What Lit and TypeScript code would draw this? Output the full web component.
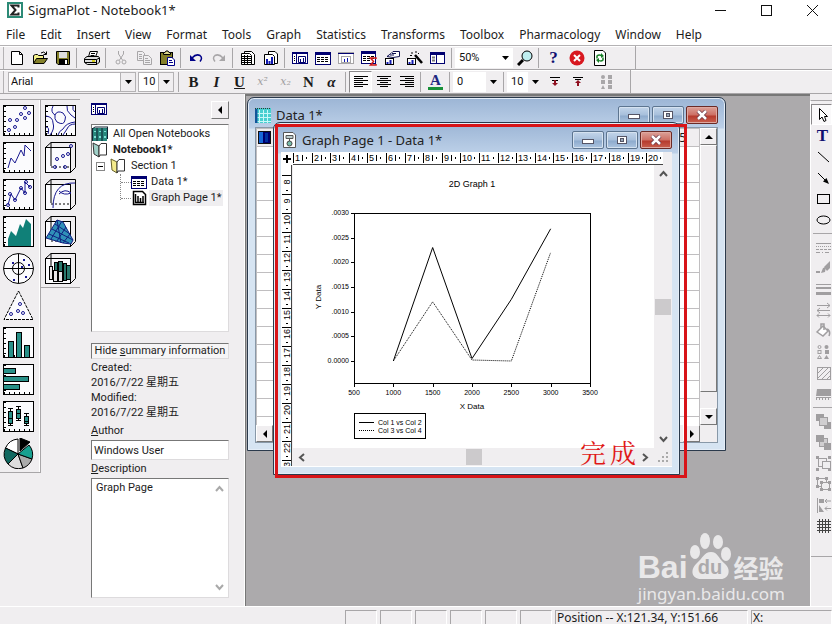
import { LitElement, html, svg, css, nothing } from "lit";
import { customElement, property } from "lit/decorators.js";

/* Line art shared by the toolbars, drawn on a 16 x 16 grid. */
const icons: Record<string, unknown> = {
  app: svg`<rect x="1" y="1" width="14" height="14" fill="#fff" stroke="#2c8a76" stroke-width="2"/><path d="M11.500 5.500V3.500H4.500L8.500 8L4.500 12.500H11.500V10.500" fill="none" stroke="#222" stroke-width="2"/>`,
  file: svg`<path d="M2.500 1.500H10.500L13.500 4.500V14.500H2.500Z" fill="#fff" stroke="#000"/><path d="M10.500 1.500V4.500H13.500" fill="none" stroke="#000"/>`,
  open: svg`<path d="M1.500 13.500V5.500L3.500 4.500H5.500L6.500 5.500H11.500V8.500" fill="#f4f08a" stroke="#000"/><path d="M1.500 13.500L4.500 8.500H15.500L12 13.500Z" fill="#84802a" stroke="#000"/><path d="M9 3Q12 .5 14 4M14.500 1.500V4.500H11.500" fill="none" stroke="#000"/>`,
  save: svg`<path d="M1.500 1.500H14.500V14.500H3L1.500 13Z" fill="#84802a" stroke="#000"/><rect x="4" y="2" width="8" height="6" fill="#ddd"/><rect x="4" y="9" width="9" height="5" fill="#000"/><rect x="10" y="10" width="2" height="4" fill="#fff"/>`,
  print: svg`<path d="M4.500 7L6 1.500H13.500L11.500 7Z" fill="#fff" stroke="#000"/><path d="M7 3.500H11M6.500 5.500H10.500" stroke="#000"/><path d="M.5 8.500L3 6.500H14.500L15.500 8V12L13 14.500H3.500L.5 12.500Z" fill="#ddd" stroke="#000"/><path d="M.5 9.500H12.500L15.500 8M1 12.500H13M12.500 9.500V14" fill="none" stroke="#000"/><path d="M8 11H11" stroke="#d8d020" stroke-width="2"/>`,
  cut: svg`<g fill="none" stroke="#a8a6a8"><path d="M5.500 1V4L9.500 10M10.500 1V4L6.500 10"/><circle cx="5" cy="12" r="2"/><circle cx="11" cy="12" r="2"/></g>`,
  copy: svg`<g fill="#efeef0" stroke="#a8a6a8"><path d="M1.500 1.500H6.500L8.500 3.500V10.500H1.500Z"/><path d="M3 4.500H6M3 6.500H6M3 8.500H6"/><path d="M7.500 5.500H12.500L15.500 8.500V14.500H7.500Z"/><path d="M9 8.500H12M9 10.500H14M9 12.500H14"/></g>`,
  paste: svg`<rect x="1.500" y="2.500" width="12" height="12" fill="#84802a" stroke="#000"/><path d="M4.500 4.500V2.500H6L7 1H9L10 2.500H11.500V4.500Z" fill="#ddd88a" stroke="#000"/><path d="M8.500 7.500H13L15.500 10V15.500H8.500Z" fill="#fff" stroke="#000088"/><path d="M10 10.500H13M10 12.500H14" stroke="#000088"/>`,
  undo: svg`<path d="M4 8Q8 3.500 12 5.500Q15 8 12 11.500" fill="none" stroke="#000088" stroke-width="1.500"/><path d="M2 5V11H8Z" fill="#000088"/>`,
  redo: svg`<path d="M12 8Q8 3.500 4 5.500Q1 8 4 11.500" fill="none" stroke="#a8a6a8" stroke-width="1.500"/><path d="M14 5V11H8Z" fill="#a8a6a8"/>`,
  sheet: svg`<path d="M4.500 1.500H11.500L14.500 4.500V14.500H4.500Z" fill="#fff" stroke="#000"/><path d="M1.500 3.500H9.500L11.500 5.500V14.500H1.500Z" fill="#fff" stroke="#000"/><path d="M2 6.500H11M2 8.500H11M2 10.500H11M2 12.500H11M4.500 5V14M7.500 5V14" stroke="#000"/>`,
  chartpage: svg`<path d="M5.500 1.500H12L14.500 4V13.500H5.500Z" fill="#fff" stroke="#000"/><path d="M1.500 4.500H9.500L11.500 6.500V14.500H1.500Z" fill="#fff" stroke="#000"/><path d="M4 9V14M6.500 11V14M9 7V14" stroke="#1018b0" stroke-width="2"/>`,
  winpage: svg`<rect x="0.500" y="2.500" width="15" height="11" fill="#fff" stroke="#000070"/><path d="M0 3.500H16M4.500 3V14" stroke="#000070"/><path d="M2 6.500H3M2 8.500H3M2 10.500H3" stroke="#000"/><path d="M6.500 6.500H13.500V12.500H6.500Z" fill="none" stroke="#000070"/><path d="M8.500 9V12M11.500 8V12" stroke="#000070"/>`,
  wintable: svg`<rect x="0.500" y="2.500" width="15" height="12" fill="#fff" stroke="#000070"/><path d="M0 3.500H16" stroke="#000070" stroke-width="3"/><path d="M2 7.500H14M2 9.500H14M2 11.500H14" stroke="#000" stroke-dasharray="3 1"/>`,
  wingraph: svg`<rect x="0.500" y="2.500" width="15" height="11" fill="#fff" stroke="#a8a6a8"/><path d="M0 3.500H16" stroke="#000070"/><rect x="3.500" y="6.500" width="9" height="6" fill="none" stroke="#a8a6a8"/><path d="M6.500 9V12M9.500 8V12" stroke="#1018b0"/>`,
  winstat: svg`<rect x="0.500" y="1.500" width="14" height="12" fill="#fff" stroke="#000070"/><path d="M0 2.500H15" stroke="#000070" stroke-width="3"/><path d="M2 6.500H13M2 8.500H13M2 10.500H9" stroke="#000" stroke-dasharray="3 1"/><path d="M15 9V8H9.500L12.500 11.500L9.500 15H15V14" fill="none" stroke="#d01818" stroke-width="1.500"/>`,
  hand: svg`<rect x="1.500" y="8.500" width="8" height="6" fill="#fff" stroke="#000"/><path d="M3.500 12V14M6.500 10V14" stroke="#1018b0" stroke-width="2"/><path d="M3 6.500L7 3.500L9 1.500H15.500V6.500L9 7.500Z" fill="#fff" stroke="#101050"/><path d="M6 5H10M8 3.500H12" stroke="#101050"/>`,
  wand: svg`<rect x="0.500" y="8.500" width="8" height="6" fill="#fff" stroke="#000"/><path d="M2.500 12V14M5.500 10V14" stroke="#1018b0" stroke-width="2"/><path d="M8 5L15 13" stroke="#000" stroke-width="2.500"/><path d="M5 2V4M9 1V3M3 5.500H5M11 4L12 3" stroke="#000"/>`,
  winlist: svg`<rect x="0.500" y="2.500" width="14" height="11" fill="#fff" stroke="#000070"/><path d="M0 3.500H15" stroke="#000070" stroke-width="3"/><path d="M6.500 4V14" stroke="#000070"/><path d="M2 7.500H5M2 10.500H5" stroke="#777" stroke-width="2"/>`,
  lens: svg`<circle cx="10" cy="6" r="5" fill="#bfeef0" stroke="#000"/><path d="M6 10L1 15" stroke="#000" stroke-width="3"/>`,
  stop: svg`<circle cx="8" cy="8" r="7.500" fill="#d81820"/><path d="M5 5L11 11M11 5L5 11" stroke="#fff" stroke-width="2"/>`,
  refresh: svg`<path d="M2.500 0.500H11L13.500 3V15.500H2.500Z" fill="#fff" stroke="#000"/><path d="M5 8.500V6Q7 4 10 6M11 7.500V10Q9 12 6 10" fill="none" stroke="#188028" stroke-width="1.500"/><path d="M9 3V8L12 6ZM7 8V13L4 10Z" fill="#188028"/>`,
  left: svg`<path d="M1 2.500H15M1 4.500H10M1 6.500H15M1 8.500H10M1 10.500H15M1 12.500H10" stroke="#000"/>`,
  center: svg`<path d="M1 2.500H15M4 4.500H12M1 6.500H15M4 8.500H12M1 10.500H15M4 12.500H12" stroke="#000"/>`,
  right: svg`<path d="M1 2.500H15M6 4.500H15M1 6.500H15M6 8.500H15M1 10.500H15M6 12.500H15" stroke="#000"/>`,
  down: svg`<path d="M3 3.500H13M5 6.500H11" stroke="#000"/><path d="M8 6V10" stroke="#901020" stroke-width="2"/><path d="M5 9H11L8 12Z" fill="#901020"/>`,
  up: svg`<path d="M3 3.500H13M5 5.500H11" stroke="#000"/><path d="M8 8V12" stroke="#901020" stroke-width="2"/><path d="M5 9H11L8 6Z" fill="#901020"/>`,
  dots: svg`<g fill="#a8a6a8"><circle cx="4" cy="3" r="2"/><rect x="9" y="1" width="4" height="4"/><rect x="2" y="6" width="4" height="4"/><rect x="9" y="6" width="4" height="4"/><path d="M2 15L4 11L6 15Z"/><rect x="9" y="11" width="4" height="4"/></g>`,
  pointer: svg`<path d="M4.500 1.500V12.500L7 10L9 14.500L11 13.500L9.500 9.500H12.500Z" fill="#fff" stroke="#000"/>`,
  line: svg`<path d="M3 3L14 13" stroke="#000"/>`,
  arrow: svg`<path d="M3 3L12 12" stroke="#000"/><path d="M14 14L8 11.500L11.500 8Z" fill="#000"/>`,
  rect: svg`<rect x="2.500" y="3.500" width="12" height="9" fill="none" stroke="#000"/>`,
  oval: svg`<ellipse cx="8.500" cy="8" rx="6.500" ry="4" fill="none" stroke="#000"/>`,
  dashes: svg`<g stroke="#a09ea0"><path d="M1 4.500H16"/><path d="M1 7.500H16" stroke-dasharray="1 1"/><path d="M1 10.500H16" stroke-dasharray="3 1"/><path d="M1 13.500H16" stroke-dasharray="4 2 1 2"/></g>`,
  brush: svg`<g fill="#a09ea0"><path d="M1 13H5V11H1ZM6 13L8 8L11 7L10 12Z"/><path d="M9 7L15 1V8L12 11Z"/></g>`,
  weights: svg`<path d="M1 3.500H16" stroke="#a09ea0"/><path d="M1 7H16" stroke="#a09ea0" stroke-width="2"/><path d="M1 12.500H16" stroke="#a09ea0" stroke-width="3"/>`,
  swaps: svg`<g fill="none" stroke="#a09ea0"><path d="M2 3.500H15M12 1L15 3.500L12 6M15 8.500H2M5 6L2 8.500L5 11M2 13.500H15M4 11.500L2 13.500L4 15.500M13 11.500L15 13.500L13 15.500"/></g>`,
  bucket: svg`<path d="M2 9L8 3L13 8L8 13Z" fill="#fff" stroke="#a09ea0" stroke-width="1.500"/><path d="M6 5V1H9V7M12 6Q16 8 14 13" fill="none" stroke="#a09ea0" stroke-width="1.500"/>`,
  symbols: svg`<g fill="none" stroke="#a09ea0"><circle cx="4.500" cy="3" r="1.500"/><rect x="3" y="6.500" width="3" height="3"/><path d="M2.500 14.500L4.500 11.500L6.500 14.500Z"/></g><g fill="#a09ea0"><circle cx="11.500" cy="3" r="2"/><rect x="10" y="6" width="4" height="4"/><path d="M9 15L11.500 11L14 15Z"/></g>`,
  hatch: svg`<rect x="2.500" y="2.500" width="13" height="12" fill="none" stroke="#a09ea0"/><path d="M3 8L8 3M3 13L13 3M7 14L15 6M12 14L15 11" stroke="#a09ea0"/>`,
  ruler: svg`<path d="M2 3H16V10H1Z" fill="#a09ea0"/><path d="M1 11.500H16" stroke="#a09ea0"/><path d="M1 13H16" stroke="#a09ea0" stroke-width="2" stroke-dasharray="1 2"/>`,
  front: svg`<g fill="#a09ea0"><rect x="1" y="1" width="8" height="7"/><rect x="9" y="9" width="7" height="7"/></g><rect x="4.500" y="4.500" width="8" height="8" fill="#d0ced0" stroke="#a09ea0"/>`,
  back: svg`<rect x="4.500" y="4.500" width="8" height="8" fill="#d0ced0" stroke="#a09ea0"/><g fill="#a09ea0"><rect x="1" y="1" width="8" height="7"/><rect x="9" y="9" width="7" height="7"/></g>`,
  group: svg`<g fill="none" stroke="#a09ea0"><rect x="3.500" y="3.500" width="8" height="8"/><rect x="7.500" y="6.500" width="8" height="7" fill="#efeef0"/></g><g fill="#a09ea0"><rect x="1" y="1" width="3" height="3"/><rect x="13" y="1" width="3" height="3"/><rect x="1" y="13" width="3" height="3"/><rect x="13" y="13" width="3" height="3"/></g>`,
  ungroup: svg`<g fill="none" stroke="#a09ea0"><rect x="2.500" y="2.500" width="9" height="8"/><rect x="6.500" y="6.500" width="8" height="7" fill="#efeef0"/></g><g fill="#a09ea0"><rect x="1" y="1" width="3" height="3"/><rect x="10" y="1" width="3" height="3"/><rect x="1" y="9" width="3" height="3"/><rect x="5" y="5" width="3" height="3"/><rect x="13" y="5" width="3" height="3"/><rect x="5" y="12" width="3" height="3"/><rect x="13" y="12" width="3" height="3"/></g>`,
  align: svg`<path d="M2.500 1V16M10 4H16M10 11.500H16M12 2L10 4L12 6M12 9.500L10 11.500L12 13.500" fill="none" stroke="#a09ea0"/><path d="M4 2H9V6H4ZM4 8L9 15H4Z" fill="#a09ea0"/>`,
  grid: svg`<path d="M2 3.500H16M2 6.500H16M2 9.500H16M2 12.500H16M4.500 1V15M7.500 1V15M10.500 1V15M13.500 1V15" stroke="#444"/>`,
  books: svg`<rect x="0" y="2" width="15" height="13" fill="#28877c"/><path d="M0 3L3 1H16L15 3M5 2V15M10 2V15M0.500 2V15M15.500 1V13" fill="none" stroke="#123"/><path d="M3 5V6M8 5V6M13 5V6M3 10V12M8 10V12M13 10V12" stroke="#7fe0d8" stroke-width="2"/>`,
  notebook: svg`<path d="M1 1L7 4V15L2 12Z" fill="#9fd0c8" stroke="#333"/><path d="M7 4L9 1.500H14.500V13H8L7 15Z" fill="#fff" stroke="#333"/>`,
  section: svg`<path d="M1 1L7 4V15L2 12Z" fill="#f4eb8c" stroke="#66602a"/><path d="M7 4L9 1.500H14.500V13H8L7 15Z" fill="#fff" stroke="#333"/>`,
  graphpage: svg`<path d="M2.500 1.500H11.500L14.500 4.500V14.500H2.500Z" fill="#fff" stroke="#000" stroke-width="1.500"/><path d="M4.500 4V12.500H13M7 6V12M9.500 8V12M12 6V12" fill="none" stroke="#000" stroke-width="1.500"/>`,
  datawin: svg`<rect x="0" y="1" width="16" height="15" fill="#48cfd0"/><path d="M0 1.500H16M0.500 1V16" stroke="#333" stroke-dasharray="1 1"/><path d="M4.500 3V16M8.500 3V16M12.500 3V16M1 6.500H16M1 10.500H16M1 14.500H16" stroke="#c8f8f8"/><path d="M1 2V16" stroke="#159" stroke-width="3"/>`,
  graphwin: svg`<path d="M2.500 .5H12L14.500 3V15.500H2.500Z" fill="#fff" stroke="#555"/><path d="M5 3.500H12V6.500H5ZM8.500 7V9" fill="#bcc" stroke="#555"/><circle cx="8.500" cy="11.500" r="2.500" fill="#7ba" stroke="#444"/>`,
  bluecell: svg`<rect x="1.500" y="1.500" width="12" height="12" fill="#000070" stroke="#111"/><rect x="2" y="2" width="4" height="11" fill="#1868d8"/><rect x="8" y="3" width="3" height="9" fill="#0030a0"/>`,
};

const icon = (name: string) => html`<svg class="icon" width="16" height="16" viewBox="0 0 16 16" aria-hidden="true">${icons[name]}</svg>`;

/* Graph-type thumbnails, drawn on a 31 x 31 grid. */
const frame = svg`<rect x="0.500" y="0.500" width="30" height="30" fill="#fbfbfd" stroke="#000"/><path d="M2 1V30" stroke="#000" stroke-width="2" stroke-dasharray="1 4"/><path d="M1 29H30" stroke="#000" stroke-width="2" stroke-dasharray="1 4"/>`;
const cube = svg`<rect x="0.500" y="5.500" width="25" height="25" fill="#fbfbfd" stroke="#000"/><path d="M.5 5.500L6 .5H30.500V25.500L25.500 30.500M6 .5V24" fill="none" stroke="#000"/><path d="M6 5.500H25.500V25M6 25H26" fill="none" stroke="#000" stroke-dasharray="2 2"/>`;
const dot = (x: number, y: number) => svg`<circle cx=${x} cy=${y} r="1.500" fill="none" stroke="#181890"/>`;
const thumbs: Record<string, unknown> = {
  Scatter: svg`${frame}${[[6, 25], [12, 22], [7, 15], [14, 15], [18, 9], [22, 13], [26, 8], [22, 3]].map(([x, y]) => dot(x, y))}`,
  Line: svg`${frame}<path d="M5 26L8 16L12 21L18 8L21 14L22 3L28 9" fill="none" stroke="#181890"/>`,
  "Line and scatter": svg`${frame}<path d="M5 26L8 15L12 21L18 9L22 14L22 3L27 8" fill="none" stroke="#181890"/>${[[5, 26], [7, 15], [12, 21], [18, 9], [22, 14], [23, 3], [27, 8]].map(([x, y]) => dot(x, y))}`,
  Area: svg`${frame}<path d="M5 30V23L8 15L13 20L17 8L20 12L23 3L28 8V30Z" fill="#108078"/>`,
  Polar: svg`<circle cx="15.500" cy="15.500" r="15" fill="#fbfbfd" stroke="#000"/><circle cx="15.500" cy="15.500" r="6" fill="none" stroke="#000"/><path d="M.5 15.500H30.500M15.500 .5V30.500" stroke="#000"/>${[[9, 9], [20, 6], [25, 11], [22, 23], [10, 26], [18, 13]].map(([x, y]) => svg`<rect x=${x} y=${y} width="2" height="2" fill="#181890"/>`)}`,
  Ternary: svg`<path d="M15.500 1L30 29.500H1Z" fill="#fbfbfd" stroke="#000" stroke-dasharray="3 1"/>${[[17, 14], [15, 21], [20, 23], [8, 24]].map(([x, y]) => dot(x, y))}`,
  "Vertical bar": svg`${frame}<g fill="#289088" stroke="#000"><rect x="5.500" y="14.500" width="5" height="16"/><rect x="13.500" y="5.500" width="5" height="25"/><rect x="21.500" y="18.500" width="5" height="12"/></g>`,
  "Horizontal bar": svg`${frame}<g fill="#289088" stroke="#000"><rect x=".5" y="4.500" width="12" height="5"/><rect x=".5" y="12.500" width="25" height="5"/><rect x=".5" y="20.500" width="16" height="5"/></g>`,
  "Box plot": svg`${frame}<path d="M7.500 7V25M15.500 5V20M23.500 12V25M5 7.500H10M5 24.500H10M13 5.500H18M13 19.500H18M21 12.500H26M21 24.500H26" stroke="#000"/><g fill="#289088" stroke="#000"><rect x="5.500" y="10.500" width="4" height="12"/><rect x="13.500" y="8.500" width="4" height="9"/><rect x="21.500" y="15.500" width="4" height="7"/></g><path d="M6 17.500H9M14 12.500H18M22 20.500H26" stroke="#000"/>`,
  Pie: svg`<g stroke="#000"><path d="M15 16V1A15 15 0 0 0 2.500 10Z" fill="#fff"/><path d="M15 16L2.500 10A15 15 0 0 0 5 26Z" fill="#106860"/><path d="M15 16L5 26A15 15 0 0 0 20 30Z" fill="#ddd"/><path d="M15 16L20 30A15 15 0 0 0 29 21Z" fill="#aaa"/><path d="M15 16L29 21A15 15 0 0 0 26 7Z" fill="#18a090"/><path d="M17 13V0L27 4Z" fill="#000"/></g>`,
  Contour: svg`${frame}<g fill="none" stroke="#181890"><path d="M1 11Q8 12 8 18Q10 24 5 30M8 1Q5 7 10 10Q9 14 12 17Q19 21 20 15Q22 12 18 8Q12 5 10 10M1 22Q5 22 3 29M22 1Q21 6 26 10L30 13M30 19Q24 19 22 24L18 30M13 30Q14 26 18 24Q21 18 30 17M28 1Q27 5 30 7"/></g>`,
  "3D scatter": svg`${cube}${[[12, 17], [18, 14], [23, 12], [26, 4], [10, 25], [20, 25]].map(([x, y]) => dot(x, y))}`,
  "3D line": svg`${cube}<path d="M8 29Q8 3 30 4M14 15Q20 9 26 14Q19 17 14 12" fill="none" stroke="#181890"/>`,
  "3D mesh": svg`${cube}<path d="M1 22L12 4L18 6L28 24L26 28L18 27Z" fill="#3090b8" stroke="#102080"/><path d="M4 18L24 27M7 13L28 24M10 8L25 18M6 23L17 5M12 25L21 11M18 27L25 18M12 4L16 27" fill="none" stroke="#102080"/>`,
  "3D bar": svg`${cube}<g fill="#28786c" stroke="#000"><rect x="9.500" y="9.500" width="3" height="17"/><rect x="13.500" y="8.500" width="4" height="18"/><rect x="18.500" y="10.500" width="3" height="17"/><rect x="21.500" y="12.500" width="4" height="14"/></g><g fill="#e8e6e8" stroke="#000"><rect x="4.500" y="13.500" width="3" height="13"/><rect x="8.500" y="17.500" width="4" height="11"/><rect x="13.500" y="18.500" width="4" height="10"/></g>`,
};

/* Child window of the workspace: caption bar with its three buttons over a slotted client area. */
@customElement("mdi-window")
export class MdiWindow extends LitElement {
  @property() caption = "";
  @property() glyph = "";

  static styles = css`
    :host { display: flex; flex-direction: column; box-sizing: border-box; border: 1px solid #2b3a4c; border-radius: 7px 7px 0 0; background: linear-gradient(#9cb5d5, #bcd0e8 30px, #d6e4f2 31px); padding: 0 7px 7px; box-shadow: inset 0 0 0 1px #e4edf7; overflow: hidden; }
    .bar { box-sizing: border-box; display: flex; align-items: center; gap: 5px; height: 29px; padding-top: 5px; flex: none; font: 13px/20px "Noto Sans", sans-serif; color: #222; }
    .icon { flex: none; }
    h2 { flex: 1; margin: 0; font: inherit; white-space: nowrap; }
    .buttons { display: flex; gap: 2px; }
    button { width: 32px; height: 18px; padding: 0; border: 1px solid #5d7590; border-radius: 2px; background: linear-gradient(#c3d5ea, #a7bfdb 8px, #8eabcd 9px, #adc5e0); box-shadow: inset 0 0 0 1px #d5e2f0; display: grid; place-items: center; }
    button.close { border-color: #6b2a26; background: linear-gradient(#dba199, #cd6f64 8px, #b63a2d 9px, #c8604f); box-shadow: inset 0 0 0 1px #dfa8a0; }
    .client { flex: 1; min-height: 0; display: grid; }
  `;

  render() {
    return html`
      <div class="bar">
        ${icon(this.glyph)}
        <h2>${this.caption}</h2>
        <div class="buttons">
          <button aria-label="Minimize"><svg width="12" height="10"><rect x="0.500" y="4.500" width="11" height="4" fill="#fff" stroke="#556"/></svg></button>
          <button aria-label="Maximize"><svg width="12" height="10"><rect x="1.500" y="1.500" width="9" height="7" fill="#fff" stroke="#556"/><rect x="4.500" y="3.500" width="3" height="3" fill="#9ab" stroke="#556"/></svg></button>
          <button class="close" aria-label="Close"><svg width="12" height="10"><path d="M2 1L10 9M10 1L2 9" stroke="#634" stroke-width="4"/><path d="M2 1L10 9M10 1L2 9" stroke="#fff" stroke-width="2.500"/></svg></button>
        </div>
      </div>
      <div class="client"><slot></slot></div>
    `;
  }
}

/* 2D line plot with its title, axes and legend. */
@customElement("line-plot")
export class LinePlot extends LitElement {
  static styles = css`
    :host { display: block; background: #fff; overflow: hidden; }
    svg { display: block; }
    text { font-family: "Liberation Sans", sans-serif; fill: #000; }
    .title { font-size: 9px; }
    .axis { font-size: 8px; }
    .tick { font-size: 7px; }
  `;

  private px = (v: number) => 61 + ((v - 500) * 236) / 3000;
  private py = (v: number) => 196 - (v * 148) / 0.003;

  private path(points: number[][]) {
    return points.map(([x, y]) => `${this.px(x)},${this.py(y)}`).join(" ");
  }

  render() {
    const xs = [500, 1000, 1500, 2000, 2500, 3000, 3500];
    const ys = [0, 0.0005, 0.001, 0.0015, 0.002, 0.0025, 0.003];
    return html`<svg width="361" height="286" viewBox="0 0 361 286" role="img" aria-label="2D Graph 1">
      <text class="title" x="179" y="22" text-anchor="middle">2D Graph 1</text>
      <rect x="61.500" y="48.500" width="236" height="170" fill="none" stroke="#000"/>
      ${xs.map((x) => svg`<path d="M${Math.round(this.px(x)) + 0.5} 218V222" stroke="#000"/><text class="tick" x=${this.px(x)} y="230" text-anchor="middle">${x}</text>`)}
      ${ys.map((y) => svg`<path d="M58 ${Math.round(this.py(y)) + 0.5}H61" stroke="#000"/><text class="tick" x="56" y=${this.py(y) + 2} text-anchor="end">${y ? y.toFixed(4).slice(1) : "0.0000"}</text>`)}
      <text class="axis" x="179" y="244" text-anchor="middle">X Data</text>
      <text class="axis" transform="translate(28 132) rotate(-90)" text-anchor="middle">Y Data</text>
      <polyline points=${this.path([[1000, 0], [1500, 0.0023], [2000, 0.00005], [2500, 0.00125], [3000, 0.00268]])} fill="none" stroke="#000"/>
      <polyline points=${this.path([[1000, 0], [1500, 0.0012], [2000, 0.00002], [2500, 0], [3000, 0.0022]])} fill="none" stroke="#000" stroke-dasharray="1 1"/>
      <rect x="61.500" y="248.500" width="71" height="25" fill="#fff" stroke="#000"/>
      <path d="M66 257.500H81" stroke="#000"/>
      <path d="M66 265.500H81" stroke="#000" stroke-dasharray="1 1"/>
      <text class="tick" x="85" y="260">Col 1 vs Col 2</text>
      <text class="tick" x="85" y="268">Col 3 vs Col 4</text>
    </svg>`;
  }
}

type Tool = { t: string; icon?: string; glyph?: string; cls?: string; on?: boolean };
const SEP: Tool = { t: "" };

const standard: Tool[][] = [
  [
    { t: "New", icon: "file" }, { t: "Open", icon: "open" }, { t: "Save", icon: "save" }, SEP,
    { t: "Print", icon: "print" }, SEP,
    { t: "Cut", icon: "cut" }, { t: "Copy", icon: "copy" }, { t: "Paste", icon: "paste" }, SEP,
    { t: "Undo", icon: "undo" }, { t: "Redo", icon: "redo" }, SEP,
    { t: "New worksheet", icon: "sheet" }, { t: "New graph page", icon: "chartpage" }, SEP,
    { t: "View page", icon: "winpage" }, { t: "View worksheet", icon: "wintable" }, { t: "View graph", icon: "wingraph" },
    { t: "Column statistics", icon: "winstat" }, { t: "Graph properties", icon: "hand" }, { t: "Graph wizard", icon: "wand" }, { t: "Notebook manager", icon: "winlist" }, SEP,
  ],
  [
    { t: "Zoom", icon: "lens" }, SEP, { t: "Help", glyph: "?", cls: "help" }, { t: "Stop", icon: "stop" }, { t: "Refresh", icon: "refresh" },
  ],
];

const format: Tool[] = [
  SEP,
  { t: "Bold", glyph: "B", cls: "bold" }, { t: "Italic", glyph: "I", cls: "bold italic" }, { t: "Underline", glyph: "U", cls: "bold under" },
  { t: "Superscript", glyph: "x²", cls: "dim" }, { t: "Subscript", glyph: "x₂", cls: "dim" },
  { t: "Normal", glyph: "N", cls: "bold" }, { t: "Greek", glyph: "α", cls: "bold italic" }, SEP,
  { t: "Align left", icon: "left", on: true }, { t: "Align center", icon: "center" }, { t: "Align right", icon: "right" }, SEP,
  { t: "Text color", glyph: "A", cls: "color" }, SEP,
];

const drawing: Tool[] = [
  { t: "Select", icon: "pointer", on: true }, { t: "Text", glyph: "T", cls: "help" }, { t: "Line", icon: "line" }, { t: "Arrow", icon: "arrow" },
  { t: "Rectangle", icon: "rect" }, { t: "Ellipse", icon: "oval" }, SEP,
  { t: "Line type", icon: "dashes" }, { t: "Line color", icon: "brush" }, { t: "Line thickness", icon: "weights" }, { t: "Line ends", icon: "swaps" },
  { t: "Fill color", icon: "bucket" }, { t: "Symbols", icon: "symbols" }, { t: "Fill pattern", icon: "hatch" }, { t: "Bar width", icon: "ruler" }, SEP,
  { t: "Bring to front", icon: "front" }, { t: "Send to back", icon: "back" }, { t: "Group", icon: "group" }, { t: "Ungroup", icon: "ungroup" },
  { t: "Align", icon: "align" }, { t: "Grid", icon: "grid" },
];

const menus = ["File", "Edit", "Insert", "View", "Format", "Tools", "Graph", "Statistics", "Transforms", "Toolbox", "Pharmacology", "Window", "Help"];
const palettes = [
  ["Scatter", "Line", "Line and scatter", "Area", "Polar", "Ternary", "Vertical bar", "Horizontal bar", "Box plot", "Pie"],
  ["Contour", "3D scatter", "3D line", "3D mesh", "3D bar"],
];

@customElement("app-root")
export class AppRoot extends LitElement {
  static styles = css`
    :host { display: flex; flex-direction: column; height: 100vh; overflow: hidden; background: #f0eef0; color: #1c1c1c; font: 12px/16px "Noto Sans", "Noto Sans CJK SC", sans-serif; }
    * { box-sizing: border-box; }
    button { font: inherit; color: inherit; padding: 0; border: 0; background: none; }
    .icon { display: block; flex: none; }

    .titlebar { display: flex; align-items: center; height: 20px; flex: none; background: #fff; padding-left: 7px; gap: 5px; font-size: 13px; }
    .titlebar h1 { flex: 1; margin: 0; font: inherit; }
    .caption { display: flex; gap: 6px; }
    .caption button { width: 40px; height: 20px; display: grid; place-items: center; }
    .menubar { display: flex; align-items: center; gap: 15px; height: 26px; flex: none; background: #fff; padding: 4px 6px 0; border-bottom: 1px solid #b4b2b4; }

    .toolbar { display: flex; align-items: center; height: 24px; flex: none; padding-left: 5px; border-bottom: 1px solid #a8a6a8; box-shadow: inset 0 1px #fff, inset 3px 0 #f0eef0, inset 4px 0 #b4b2b4; }
    .tool { width: 23px; height: 22px; display: grid; place-items: center; flex: none; }
    .tool.on { border: 1px solid; border-color: #8a888a #fff #fff #8a888a; background: #faf9fa; }
    .sep { width: 1px; height: 20px; margin: 0 3px 0 2px; background: #a8a6a8; flex: none; }
    .sep.blank { background: none; }
    .sep.edge { height: 24px; margin-left: 24px; }
    .blank ~ .sep.edge { margin-left: 12px; }
    .combo { display: grid; flex: none; background: #fff; height: 20px; }
    .combo select, .combo .drop { grid-area: 1 / 1; }
    .combo select { appearance: none; border: 0; background: none; padding: 0 4px; width: 100%; font: 11px/18px Roboto, sans-serif; color: #111; }
    .combo .drop { justify-self: end; width: 15px; background: #f0eef0; display: grid; place-items: center; pointer-events: none; }
    .combo.zoom .drop { background: #fff; }
    .combo.framed { border: 1px solid #b4b2b4; }
    .combo.framed .drop { border-left: 1px solid #b4b2b4; }
    .face { width: 128px; margin-left: 3px; }
    .combo.face select { padding: 0 2px; }
    .size { width: 36px; margin: 0 2px; }
    .zoom { width: 58px; }
    .angle { width: 48px; }
    .space { width: 36px; }
    .glyph { font: 15px/18px "Liberation Serif", serif; }
    .bold { font-weight: bold; }
    .italic { font-style: italic; }
    .under { text-decoration: underline; }
    .dim { color: #a09ea0; font: italic 11px/18px "DejaVu Serif", serif; }
    .help { font-weight: bold; color: #101070; font-size: 17px; }
    .color { font-weight: bold; color: #202880; line-height: 14px; border-bottom: 3px solid #189038; padding: 0 2px; }

    .main { flex: 1; min-height: 0; display: flex; }
    .palettes { display: flex; align-items: flex-start; flex: none; }
    .palette { width: 41px; display: flex; flex-direction: column; gap: 6px; padding: 5px 0 3px 3px; margin-top: 5px; border-top: 1px solid #a8a6a8; border-right: 1px solid #a8a6a8; border-bottom: 1px solid #a8a6a8; box-shadow: inset -1px 0 #fff; }
    .palette + .palette { padding-left: 4px; width: 39px; border-right: 0; box-shadow: none; }
    .palette svg { display: block; }

    .notebook { width: 165px; flex: none; display: flex; flex-direction: column; padding: 7px 15px 8px 11px; border-right: 1px solid #fff; font: 11px/16px Roboto, "Noto Sans CJK SC", sans-serif; }
    .head { display: flex; justify-content: space-between; height: 18px; margin-bottom: 5px; }
    .head button { width: 18px; height: 18px; border: 1px solid; border-color: #fff #777 #777 #fff; display: grid; place-items: center; }
    .sunken { border: 1px solid; border-color: #777 #dddbdd #dddbdd #777; background: #fff; }
    .tree { margin: 0; padding: 1px 0 0; list-style: none; height: 208px; flex: none; }
    .tree ul { margin: 0; padding: 0 0 0 19px; list-style: none; }
    .row { display: flex; align-items: center; height: 16px; gap: 5px; white-space: nowrap; }
    .row.root { font-weight: bold; }
    .row.leaf { gap: 4px; }
    .row.leaf::before { content: ""; width: 10px; border-top: 1px dotted #888; margin: 0 -4px 0 -10px; }
    .leaves { border-left: 1px dotted #888; }
    .tree .leaves { padding-left: 10px; margin-left: 9px; height: 26px; }
    .box { width: 9px; height: 9px; border: 1px solid #888; display: grid; place-items: center; margin: 0 0 0 -15px; }
    .box::before { content: ""; width: 5px; height: 1px; background: #000; }
    .current { background: #efeef0; margin-left: -2px; padding: 0 2px; }
    .hide { height: 16px; margin: 11px 0 1px; line-height: 14px; border: 1px solid; border-color: #777 #dddbdd #dddbdd #777; background: #f6f5f6; white-space: nowrap; }
    .facts { margin: 0; line-height: 15px; padding-bottom: 2px; }
    .facts dd { margin: 0; }
    .notebook label { display: block; line-height: 18px; }
    .notebook input { height: 20px; width: 100%; padding: 0 2px; font: inherit; color: inherit; outline: 0; flex: none; }
    .memo { flex: 1; min-height: 0; display: flex; }
    .memo textarea { flex: 1; min-width: 0; resize: none; border: 0; outline: 0; padding: 1px 4px; font: inherit; color: inherit; background: none; overflow: hidden; }
    .arrows { display: flex; flex-direction: column; justify-content: space-between; padding: 6px 4px; opacity: 0.5; }

    .workspace { flex: 1; min-width: 0; position: relative; background: #acaaac; border-top: 2px solid #777; border-left: 1px solid #777; overflow: hidden; }
    .data-window { position: absolute; left: 1px; top: 1px; width: 479px; height: 354px; }
    .graph-window { position: absolute; left: 27px; top: 26px; width: 407px; height: 353px; }
    .outline { position: absolute; left: 29px; top: 28px; width: 412px; height: 354px; border: 3px solid #d81418; pointer-events: none; }
    .done { position: absolute; left: 334px; top: 338px; display: flex; gap: 4px; margin: 0; color: #e01818; font: 26px/36px "Noto Serif CJK SC", "Noto Sans CJK SC", sans-serif; }

    .worksheet { display: grid; grid-template-columns: 1fr 17px; grid-template-rows: 1fr 17px; border: 1px solid #8898a8; background: #f0eef0; min-height: 0; }
    .cells { border-collapse: collapse; width: 100%; background: #fff; table-layout: fixed; }
    .sheetbox { overflow: hidden; }
    .cells td, .cells th { height: 18px; padding: 0; border: 1px solid #c0bec0; font-weight: normal; font-size: 12px; line-height: 16px; }
    .cells th { background: #f0eef0; }
    .cells th:last-child { text-align: right; padding-right: 13px; }
    .cells .index { width: 20px; }
    .vbar, .hbar { display: flex; justify-content: space-between; background: #f0eef0; }
    .vbar { flex-direction: column; }
    .raised { background: #f0eef0; border: 1px solid; border-color: #fff #777 #777 #fff; width: 17px; height: 17px; display: grid; place-items: center; flex: none; }
    .thumb { background: #f0eef0; border: 1px solid; border-color: #fff #777 #777 #fff; height: 247px; flex: none; margin-bottom: auto; }

    .page { display: grid; grid-template-columns: 12px 1fr 18px; grid-template-rows: 13px 1fr 18px; background: #f0eef0; border-bottom: 1px solid #fff; min-height: 0; overflow: hidden; }
    .page svg { display: block; }
    .page .side { grid-row: 2 / 4; overflow: hidden; }
    .page .top { grid-column: 2 / 4; overflow: hidden; }
    .page text { font: 9px "Liberation Sans", sans-serif; fill: #000; }
    .scroll { display: flex; justify-content: space-between; align-items: center; background: #f0eef0; padding: 0 5px; }
    .scroll.vertical { flex-direction: column; padding: 5px 0; }
    .scroll span { width: 16px; height: 16px; background: #cccacc; }
    .corner { display: flex; align-items: center; justify-content: center; }

    .watermark { position: absolute; right: 25px; bottom: 1px; color: #e9e8e9; }
    .logo { display: flex; align-items: flex-end; height: 50px; }
    .logo b { font: bold 32px/32px "Liberation Sans", sans-serif; }
    .logo .cn { font: bold 25px/32px "Noto Sans CJK SC", sans-serif; margin-left: 2px; }
    .paw { width: 44px; height: 52px; display: block; }
    .paw text { font: bold 20px "Liberation Sans", sans-serif; fill: #acaaac; }
    .site { font-size: 17px; line-height: 22px; }

    .drawing { width: 22px; flex: none; display: flex; flex-direction: column; margin-top: 6px; border-left: 1px solid #fff; border-top: 1px solid #a8a6a8; padding: 3px 0 0; }
    .drawing .tool { width: 21px; height: 21px; padding-left: 2px; }
    .drawing .sep { width: auto; height: 1px; margin: 3px 0 2px 2px; }
    .drawing .end { height: 1px; background: #a8a6a8; margin-top: 20px; }

    .status { display: flex; gap: 3px; height: 18px; flex: none; padding-top: 3px; justify-content: flex-end; border-top: 1px solid #fff; line-height: 13px; white-space: nowrap; }
    .status span { flex: 0 1 32px; border-top: 1px solid #a8a6a8; border-left: 1px solid #a8a6a8; border-right: 1px solid #fff; padding-left: 1px; }
    .status .pos { flex-basis: 193px; }
    .status .tail { flex-basis: 81px; }
  `;

  private tool = (x: Tool) =>
    x.t === ""
      ? html`<span class="sep"></span>`
      : html`<button class="tool ${x.on ? "on" : ""}" aria-label=${x.t}>${x.icon ? icon(x.icon) : html`<span class="glyph ${x.cls ?? ""}">${x.glyph}</span>`}</button>`;

  private combo = (cls: string, label: string, value: string) => html`
    <span class="combo ${cls}">
      <select aria-label=${label}><option>${value}</option></select>
      <span class="drop"><svg width="7" height="4"><path d="M0 0H7L3.500 4Z"/></svg></span>
    </span>`;

  private chevron = (d: string) => html`<svg width="9" height="9" viewBox="0 0 9 9"><path d=${d} fill="none" stroke="#555" stroke-width="2"/></svg>`;
  private wedge = (d: string) => html`<svg width="8" height="8" viewBox="0 0 8 8"><path d=${d} fill="#000"/></svg>`;

  private ruler(first: number, last: number, offset: number) {
    const out = [];
    for (let n = first; n <= last; n++) {
      const x = offset + Math.round((n - first) * 18.6);
      const end = x + (n > 9 ? 14 : 9);
      out.push(svg`<path d="M${x + 0.5} 1V11" stroke="#000"/><text x=${x + 2} y="9">${n}</text><path d="M${end + 0.5} ${n > 9 ? 5 : 3}V${n > 9 ? 7 : 9}" stroke="#000"/>${n < 10 ? svg`<path d="M${end + 4.5} 5V7" stroke="#000"/>` : nothing}`);
    }
    return out;
  }

  private worksheet() {
    return html`<div class="worksheet">
      <div class="sheetbox">
        <table class="cells">
          <thead><tr><th class="index">${icon("bluecell")}</th><th>5</th></tr></thead>
          <tbody>${Array.from({ length: 16 }, () => html`<tr><td class="index"></td><td></td></tr>`)}</tbody>
        </table>
      </div>
      <div class="vbar">
        <span class="raised">${this.wedge("M0 6L4 2L8 6Z")}</span>
        <span class="thumb"></span>
        <span class="raised">${this.wedge("M0 2L4 6L8 2Z")}</span>
      </div>
      <div class="hbar">
        <span class="raised">${this.wedge("M6 0L2 4L6 8Z")}</span>
        <span class="raised">${this.wedge("M2 0L6 4L2 8Z")}</span>
      </div>
    </div>`;
  }

  private graphPage() {
    return html`<div class="page">
      <svg width="12" height="13"><rect width="12" height="13" fill="#fff"/><path d="M2 7H10M6 3V11" stroke="#000" stroke-width="2"/></svg>
      <div class="top"><svg width="370" height="13"><rect width="370" height="12" fill="#fff"/><path d="M0 12.500H370" stroke="#444"/>${this.ruler(1, 20, 0)}</svg></div>
      <div class="side"><svg width="12" height="305"><rect width="11" height="305" fill="#fff"/><path d="M10.500 0V305" stroke="#444"/><g transform="rotate(-90)">${Array.from({ length: 16 }, (_, i) => {
        const y = 10 + i * 19;
        const mid = y + 7;
        return svg`<path d="M${-y - 0.5} 1V10" stroke="#000"/><text x=${-mid} y="9" text-anchor="middle">${i + 8}</text><path d="M${-y - 15.5} 5V7" stroke="#000"/>`;
      })}</g></svg></div>
      <line-plot></line-plot>
      <div class="scroll vertical">${this.chevron("M1 6L4.500 2L8 6")}<span></span>${this.chevron("M1 3L4.500 7L8 3")}</div>
      <div class="scroll">${this.chevron("M6 1L2 4.500L6 8")}<span></span>${this.chevron("M3 1L7 4.500L3 8")}</div>
      <div class="corner"><svg width="10" height="10" fill="#aaa"><path d="M8 0h2v2h-2zM4 4h2v2h-2zM8 4h2v2h-2zM0 8h2v2h-2zM4 8h2v2h-2zM8 8h2v2h-2z"/></svg></div>
    </div>`;
  }

  render() {
    return html`
      <header class="titlebar">
        ${icon("app")}
        <h1>SigmaPlot - Notebook1*</h1>
        <div class="caption">
          <button aria-label="Minimize"><svg width="11" height="11"><path d="M0 5.500H11" stroke="#111"/></svg></button>
          <button aria-label="Maximize"><svg width="11" height="11"><rect x=".5" y=".5" width="10" height="10" fill="none" stroke="#111"/></svg></button>
          <button aria-label="Close"><svg width="11" height="11"><path d="M0 0L11 11M11 0L0 11" stroke="#111"/></svg></button>
        </div>
      </header>
      <nav class="menubar">${menus.map((m) => html`<button>${m}</button>`)}</nav>
      <div class="toolbar">
        ${standard[0].map(this.tool)}${this.combo("zoom", "Zoom level", "50%")}${standard[1].map(this.tool)}<span class="sep edge"></span>
      </div>
      <div class="toolbar">
        ${this.combo("framed face", "Font", "Arial")}${this.combo("framed size", "Font size", "10")}${format.map(this.tool)}
        ${this.combo("angle", "Rotation", "0")}<span class="sep"></span>${this.combo("space", "Line spacing", "10")}
        ${this.tool({ t: "Move down", icon: "down" })}${this.tool({ t: "Move up", icon: "up" })}<span class="sep blank"></span>${this.tool({ t: "Symbol style", icon: "dots" })}<span class="sep edge"></span>
      </div>

      <div class="main">
        <div class="palettes">
          ${palettes.map((p) => html`<div class="palette">${p.map((n) => html`<button aria-label=${n}><svg width="31" height="31" viewBox="0 0 31 31">${thumbs[n]}</svg></button>`)}</div>`)}
        </div>

        <aside class="notebook">
          <div class="head">${icon("winpage")}<button aria-label="Collapse panel">${this.wedge("M6 0L2 4L6 8Z")}</button></div>
          <ul class="tree sunken">
            <li class="row">${icon("books")}<span>All Open Notebooks</span></li>
            <li><div class="row root">${icon("notebook")}<span>Notebook1*</span></div>
              <ul>
                <li><div class="row"><span class="box"></span>${icon("section")}<span>Section 1</span></div>
                  <ul class="leaves">
                    <li class="row leaf">${icon("wintable")}<span>Data 1*</span></li>
                    <li class="row leaf">${icon("graphpage")}<span class="current">Graph Page 1*</span></li>
                  </ul>
                </li>
              </ul>
            </li>
          </ul>
          <button class="hide">Hide <u>s</u>ummary information</button>
          <dl class="facts"><dt>Created:</dt><dd>2016/7/22 星期五</dd><dt>Modified:</dt><dd>2016/7/22 星期五</dd></dl>
          <label for="author"><u>A</u>uthor</label>
          <input id="author" class="sunken" value="Windows User">
          <label for="about"><u>D</u>escription</label>
          <div class="memo sunken">
            <textarea id="about" .value=${"Graph Page"}></textarea>
            <div class="arrows">${this.chevron("M1 6L4.500 2L8 6")}${this.chevron("M1 3L4.500 7L8 3")}</div>
          </div>
        </aside>

        <main class="workspace">
          <mdi-window class="data-window" caption="Data 1*" glyph="datawin">${this.worksheet()}</mdi-window>
          <mdi-window class="graph-window" caption="Graph Page 1 - Data 1*" glyph="graphwin">${this.graphPage()}</mdi-window>
          <div class="outline"></div>
          <p class="done"><span>完</span><span>成</span></p>
          <div class="watermark">
            <div class="logo">
              <b>Bai</b>
              <svg class="paw" viewBox="0 0 44 52"><g fill="#e9e8e9"><ellipse cx="7" cy="21" rx="5" ry="7"/><ellipse cx="17" cy="10" rx="5" ry="8"/><ellipse cx="30" cy="11" rx="5" ry="7"/><ellipse cx="38" cy="23" rx="5" ry="7"/><path d="M23 21C30 21 30 27 36 32C44 38 41 48 33 48H13C3 48 2 38 9 32C15 27 16 21 23 21Z"/></g><text x="22" y="43" text-anchor="middle">du</text></svg>
              <span class="cn">经验</span>
            </div>
            <div class="site">jingyan.baidu.com</div>
          </div>
        </main>

        <div class="drawing">${drawing.map(this.tool)}<span class="end"></span></div>
      </div>

      <footer class="status">
        ${Array.from({ length: 6 }, () => html`<span></span>`)}
        <span class="pos">Position -- X:121.34, Y:151.66</span>
        <span class="tail">X:</span>
      </footer>
    `;
  }
}
